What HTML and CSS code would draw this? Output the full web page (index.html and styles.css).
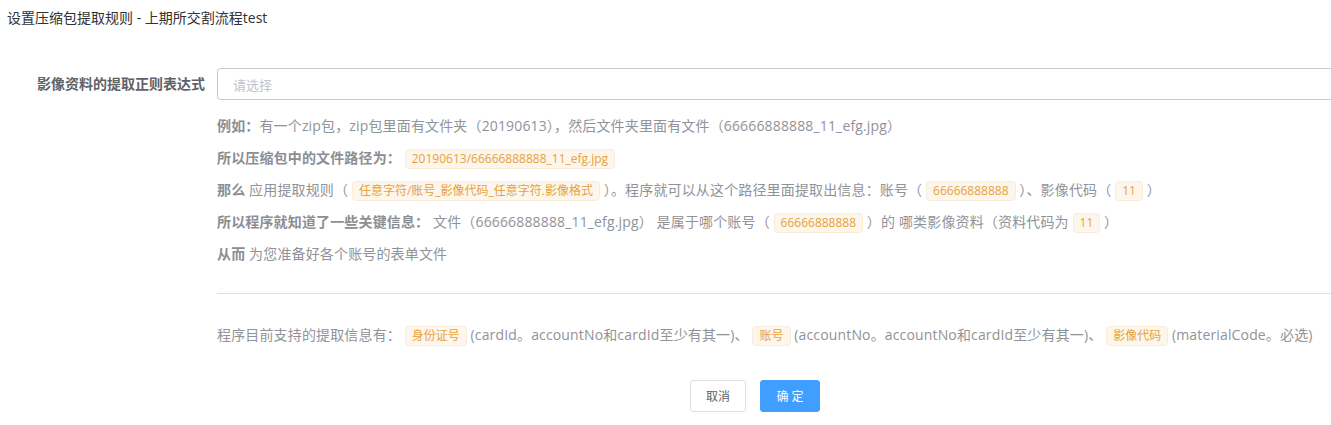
FILE: index.html
```html
<!DOCTYPE html>
<html lang="zh">
<head>
<meta charset="utf-8">
<link rel="stylesheet" href="styles.css">
</head>
<body>
<div class="dialog">
  <div class="header">设置压缩包提取规则 - 上期所交割流程test</div>
  <div class="form-item">
    <label class="label">影像资料的提取正则表达式</label>
    <div class="control">
      <div class="input"><span class="placeholder">请选择</span></div>
      <div class="help">
        <p class="line"><b>例如：</b>有一个zip包，zip包里面有文件夹（20190613），然后文件夹里面有文件（66666888888_11_efg.jpg）</p>
        <p class="line"><b>所以压缩包中的文件路径为：</b> <span class="tag">20190613/66666888888_11_efg.jpg</span></p>
        <p class="line"><b>那么</b> 应用提取规则（ <span class="tag">任意字符/账号_影像代码_任意字符.影像格式</span> ）。程序就可以从这个路径里面提取出信息：账号（ <span class="tag">66666888888</span> ）、影像代码（ <span class="tag">11</span> ）</p>
        <p class="line"><b>所以程序就知道了一些关键信息：</b> 文件（66666888888_11_efg.jpg） 是属于哪个账号（ <span class="tag">66666888888</span> ）的 哪类影像资料（资料代码为 <span class="tag">11</span> ）</p>
        <p class="line"><b>从而</b> 为您准备好各个账号的表单文件</p>
      </div>
      <div class="divider"></div>
      <p class="line">程序目前支持的提取信息有： <span class="tag">身份证号</span> (cardId。accountNo和cardId至少有其一)、 <span class="tag">账号</span> (accountNo。accountNo和cardId至少有其一)、 <span class="tag">影像代码</span> (materialCode。必选)</p>
    </div>
  </div>
  <div class="footer">
    <button class="btn">取消</button>
    <button class="btn btn-primary">确 定</button>
  </div>
</div>
</body>
</html>
```

FILE: styles.css
```css
html, body {
  margin: 0;
  padding: 0;
  background: #fff;
  overflow: hidden;
}
body {
  font-family: "Open Sans", "Noto Sans CJK SC", sans-serif;
  color: #606266;
}
.dialog {
  width: 1510px;
}
.header {
  height: 36px;
  line-height: 36px;
  padding-left: 7px;
  font-size: 14px;
  color: #303133;
}
.form-item {
  display: flex;
  margin-top: 32px;
}
.label {
  width: 217px;
  flex: none;
  box-sizing: border-box;
  padding-right: 12px;
  text-align: right;
  font-size: 14px;
  font-weight: bold;
  color: #606266;
  line-height: 32px;
}
.control {
  flex: 1;
  padding-right: 20px;
}
.input {
  height: 32px;
  box-sizing: border-box;
  border: 1px solid #c7c9cf;
  border-radius: 4px;
  padding-left: 15px;
  display: flex;
  align-items: center;
}
.placeholder {
  font-size: 13px;
  color: #c0c4cc;
}
.help {
  margin-top: 10px;
}
.line {
  margin: 0;
  height: 32px;
  line-height: 32px;
  font-size: 14px;
  letter-spacing: 0.15px;
  color: #909399;
  white-space: nowrap;
}
.line b {
  color: #8c8e93;
}
.tag {
  display: inline-block;
  height: 20px;
  line-height: 18px;
  box-sizing: border-box;
  padding: 0 6px;
  border: 1px solid #faecd8;
  border-radius: 4px;
  background: #fdf6ec;
  color: #e6a23c;
  font-size: 12px;
  letter-spacing: 0;
  vertical-align: middle;
}
.divider {
  height: 1px;
  background: #dcdfe6;
  margin: 23px 0 25px;
}
.footer {
  display: flex;
  justify-content: center;
  gap: 14px;
  margin-top: 29px;
}
.btn {
  height: 32px;
  width: 56px;
  box-sizing: border-box;
  border: 1px solid #dcdfe6;
  border-radius: 3px;
  background: #fff;
  color: #606266;
  font-family: inherit;
  font-size: 12px;
  padding: 0;
}
.btn-primary {
  width: 60px;
  background: #409eff;
  border-color: #409eff;
  color: #fff;
}
```
